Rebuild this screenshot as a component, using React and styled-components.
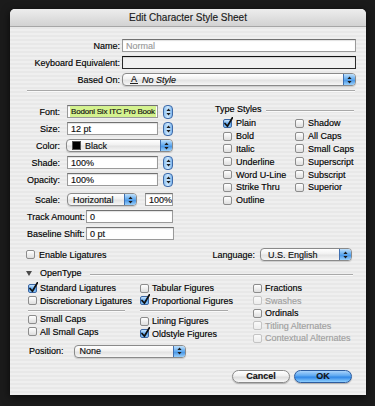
import React from 'react';
import styled, { createGlobalStyle } from 'styled-components';

const GlobalStyle = createGlobalStyle`
  html, body {
    margin: 0;
    padding: 0;
    background: #1b1b1b;
  }
  body {
    font-family: "Liberation Sans", Arial, sans-serif;
    font-size: 9px;
    color: #000;
    -webkit-text-stroke: 0.15px currentColor;
  }
`;

const Screen = styled.div`
  width: 375px;
  height: 406px;
  padding: 9px 9px 0 10px;
  box-sizing: border-box;
`;

const Dialog = styled.div`
  width: 356px;
  height: 386px;
  border-radius: 5px 5px 0 0;
  overflow: hidden;
  display: flex;
  flex-direction: column;
  background: repeating-linear-gradient(#efefef 0 2px, #e8e8e8 2px 4px);
  box-shadow: 0 2px 8px rgba(0, 0, 0, 0.7);
`;

const TitleBar = styled.div`
  height: 18px;
  flex: none;
  box-sizing: border-box;
  display: flex;
  align-items: center;
  justify-content: center;
  font-size: 10px;
  color: #1a1a1a;
  background: linear-gradient(#ededed, #d2d2d2);
  border-bottom: 1px solid #a6a6a6;
`;

const Body = styled.div`
  padding: 12px 10px 0 17px;
  display: flex;
  flex-direction: column;
`;

const TopGrid = styled.div`
  display: grid;
  grid-template-columns: 93px 1fr;
  grid-auto-rows: 13px;
  column-gap: 2px;
  row-gap: 4px;
  align-items: center;
`;

const Label = styled.span`
  text-align: right;
  white-space: nowrap;
  width: ${p => (p.$w ? `${p.$w}px` : 'auto')};
  flex: none;
  margin-right: ${p => p.$gap || 0}px;
`;

const TextInput = styled.div`
  height: 13px;
  box-sizing: border-box;
  width: ${p => (p.$w ? `${p.$w}px` : 'auto')};
  flex: none;
  display: flex;
  align-items: center;
  padding-left: 3px;
  border: 1px solid ${p => (p.$focus ? '#2a2a2a' : '#9a9a9a')};
  border-top-color: ${p => (p.$focus ? '#111' : '#717171')};
  background: ${p => (p.$focus ? '#f1f1f1' : '#fff')};
  box-shadow: inset 0 1px 1px rgba(0, 0, 0, 0.12);
  color: ${p => (p.$muted ? '#9a9a9a' : '#111')};
  white-space: nowrap;
  overflow: hidden;
  margin-right: ${p => p.$mr || 0}px;
`;

const Selection = styled.span`
  background: #d4f28f;
  margin-left: -1px;
  padding: 1px 1px;
  font-size: 8px;
  letter-spacing: -0.2px;
`;

const PopupBox = styled.div`
  height: 13px;
  box-sizing: border-box;
  width: ${p => (p.$w ? `${p.$w}px` : 'auto')};
  flex: none;
  display: flex;
  align-items: center;
  border: 1px solid #8a8a8a;
  border-radius: 4px;
  overflow: hidden;
  background: linear-gradient(#ffffff, #f1f1f1 45%, #e2e2e2 55%, #f6f6f6);
  box-shadow: 0 1px 1px rgba(0, 0, 0, 0.15);
  margin-right: ${p => p.$mr || 0}px;
`;

const PopupText = styled.span`
  flex: 1;
  display: flex;
  align-items: center;
  gap: 4px;
  padding-left: ${p => p.$pl || 7}px;
  white-space: nowrap;
  color: #111;
`;

const PopupCap = styled.span`
  width: 11px;
  align-self: stretch;
  display: flex;
  align-items: center;
  justify-content: center;
  border-left: 1px solid #3f6fb0;
  background: linear-gradient(#bfe0fb, #5ea8ee 50%, #3f8fe3 51%, #9ad0fb);
`;

const StepperBox = styled.span`
  width: 10px;
  height: 14px;
  box-sizing: border-box;
  flex: none;
  display: flex;
  align-items: center;
  justify-content: center;
  border: 1px solid #3f6aa8;
  border-radius: 4px;
  background: linear-gradient(90deg, #8fc3f2, #cfe8fd 50%, #7db6ee);
`;

const Swatch = styled.span`
  width: 7px;
  height: 7px;
  background: #000;
  border: 1px solid #555;
`;

const StyleIcon = styled.span`
  font-size: 9px;
  line-height: 8px;
  border-bottom: 1px solid #222;
  padding: 0 1px;
`;

const Italic = styled.span`
  font-style: italic;
`;

const Arrows = () => (
  <svg width="5" height="8" viewBox="0 0 5 8">
    <path d="M2.5 0.5 L4.6 3 L0.4 3 Z M2.5 7.5 L4.6 5 L0.4 5 Z" fill="#1d1d1d" />
  </svg>
);

const Stepper = () => (
  <StepperBox>
    <Arrows />
  </StepperBox>
);

const Popup = ({ w, mr, pl, children }) => (
  <PopupBox $w={w} $mr={mr}>
    <PopupText $pl={pl}>{children}</PopupText>
    <PopupCap>
      <Arrows />
    </PopupCap>
  </PopupBox>
);

const Separator = styled.div`
  height: 1px;
  background: #a9a9a9;
  border-bottom: 1px solid #fafafa;
  width: ${p => (p.$w ? `${p.$w}px` : 'auto')};
  margin: ${p => p.$m || '0'};
`;

const Middle = styled.div`
  display: flex;
  margin-top: 13px;
`;

const FieldColumn = styled.div`
  width: 188px;
  flex: none;
  display: flex;
  flex-direction: column;
  gap: 4px;
`;

const FieldRow = styled.div`
  display: flex;
  align-items: center;
  height: 13px;
  margin-top: ${p => p.$mt || 0}px;
`;

const StylesColumn = styled.div`
  flex: 1;
  display: flex;
  flex-direction: column;
  padding-right: 4px;
  margin-top: -1px;
`;

const GroupHeader = styled.div`
  display: flex;
  align-items: center;
  height: 10px;
  gap: ${p => p.$gap ?? 4}px;
`;

const HeaderLine = styled.span`
  flex: 1;
  height: 1px;
  background: #a9a9a9;
  border-bottom: 1px solid #fafafa;
  margin-top: 3px;
  margin-left: ${p => p.$ml || 0}px;
`;

const StylesGrid = styled.div`
  display: grid;
  grid-template-columns: 72px 1fr;
  grid-template-rows: repeat(7, 12.8px);
  grid-auto-flow: column;
  padding-left: 8px;
  margin-top: 3px;
`;

const CheckRow = styled.label`
  display: flex;
  align-items: center;
  gap: ${p => p.$gap || 3}px;
  height: ${p => p.$h || 12.5}px;
  white-space: nowrap;
  color: ${p => (p.$disabled ? '#a0a0a0' : '#000')};
`;

const Box = styled.span`
  position: relative;
  width: 9px;
  height: 9px;
  box-sizing: border-box;
  flex: none;
  border: 1px solid ${p => (p.$checked ? '#3b66a3' : p.$disabled ? '#c4c4c4' : '#8c8c8c')};
  border-radius: 2px;
  background: ${p =>
    p.$checked
      ? 'linear-gradient(#c8e4fd, #5da6ee 55%, #8cc6f7)'
      : p.$disabled
      ? 'linear-gradient(#fafafa, #ececec)'
      : 'linear-gradient(#ffffff, #dedede)'};
`;

const Tick = styled.svg`
  position: absolute;
  left: 0px;
  top: -3px;
`;

const Check = ({ label, checked, disabled, gap, h }) => (
  <CheckRow $disabled={disabled} $gap={gap} $h={h}>
    <Box $checked={checked} $disabled={disabled}>
      {checked && (
        <Tick width="9" height="11" viewBox="0 0 9 11">
          <path d="M1 6.5 L3.4 9.3 L8.4 0.8" stroke="#111" strokeWidth="1.7" fill="none" strokeLinecap="round" strokeLinejoin="round" />
        </Tick>
      )}
    </Box>
    {label}
  </CheckRow>
);

const LigRow = styled.div`
  display: flex;
  align-items: center;
  justify-content: space-between;
  height: 13px;
  margin-top: 8px;
  margin-left: -1px;
  padding-right: 4px;
`;

const LangGroup = styled.div`
  display: flex;
  align-items: center;
`;

const OpenTypeHeader = styled(GroupHeader)`
  margin-top: 7px;
  padding-right: 3px;
`;

const Disclosure = styled.span`
  width: 0;
  height: 0;
  border-left: 3px solid transparent;
  border-right: 3px solid transparent;
  border-top: 5px solid #4a4a4a;
  margin-left: -1px;
  margin-right: 8px;
`;

const OpenTypeGrid = styled.div`
  display: grid;
  grid-template-columns: 112px 113px 1fr;
  padding-left: 1px;
  margin-top: 4px;
`;

const OTColumn = styled.div`
  display: flex;
  flex-direction: column;
`;

const PositionRow = styled.div`
  display: flex;
  align-items: center;
  height: 13px;
  margin-left: 2px;
`;

const ButtonRow = styled.div`
  display: flex;
  justify-content: flex-end;
  gap: 4px;
  padding-right: 4px;
  margin-top: 12px;
`;

const Button = styled.button`
  width: 58px;
  height: 13px;
  box-sizing: border-box;
  padding: 0;
  border-radius: 7px;
  font-family: "Liberation Sans", Arial, sans-serif;
  font-size: 9px;
  font-weight: bold;
  color: #111;
  border: 1px solid ${p => (p.$primary ? '#2d5c9e' : '#8a8a8a')};
  background: ${p =>
    p.$primary
      ? 'linear-gradient(#a9d3fb, #5aa6f0 45%, #2f86e6 55%, #8fd0ff)'
      : 'linear-gradient(#ffffff, #f0f0f0 45%, #dcdcdc 55%, #f8f8f8)'};
  box-shadow: 0 1px 1px rgba(0, 0, 0, 0.25);
`;

export default function App() {
  return (
    <>
      <GlobalStyle />
      <Screen>
        <Dialog>
          <TitleBar>Edit Character Style Sheet</TitleBar>
          <Body>
            <TopGrid>
              <Label>Name:</Label>
              <TextInput $muted>Normal</TextInput>
              <Label>Keyboard Equivalent:</Label>
              <TextInput $focus />
              <Label>Based On:</Label>
              <Popup pl={7}>
                <StyleIcon>A</StyleIcon>
                <Italic>No Style</Italic>
              </Popup>
            </TopGrid>

            <Separator $m="4px 1px 0 0" />

            <Middle>
              <FieldColumn>
                <FieldRow>
                  <Label $w={33} $gap={7}>Font:</Label>
                  <TextInput $w={91} $mr={5}>
                    <Selection>Bodoni Six ITC Pro Book</Selection>
                  </TextInput>
                  <Stepper />
                </FieldRow>
                <FieldRow>
                  <Label $w={33} $gap={7}>Size:</Label>
                  <TextInput $w={91} $mr={5}>12 pt</TextInput>
                  <Stepper />
                </FieldRow>
                <FieldRow>
                  <Label $w={33} $gap={6}>Color:</Label>
                  <Popup w={107} pl={5}>
                    <Swatch />
                    <span>Black</span>
                  </Popup>
                </FieldRow>
                <FieldRow>
                  <Label $w={33} $gap={7}>Shade:</Label>
                  <TextInput $w={91} $mr={5}>100%</TextInput>
                  <Stepper />
                </FieldRow>
                <FieldRow>
                  <Label $w={33} $gap={7}>Opacity:</Label>
                  <TextInput $w={91} $mr={5}>100%</TextInput>
                  <Stepper />
                </FieldRow>
                <FieldRow $mt={3}>
                  <Label $w={33} $gap={7}>Scale:</Label>
                  <Popup w={70} mr={8} pl={5}>Horizontal</Popup>
                  <TextInput $w={28}>100%</TextInput>
                </FieldRow>
                <FieldRow>
                  <Label $w={56} $gap={3}>Track Amount:</Label>
                  <TextInput $w={87}>0</TextInput>
                </FieldRow>
                <FieldRow>
                  <Label $w={56} $gap={3}>Baseline Shift:</Label>
                  <TextInput $w={88}>0 pt</TextInput>
                </FieldRow>
              </FieldColumn>

              <StylesColumn>
                <GroupHeader>
                  <span>Type Styles</span>
                  <HeaderLine />
                </GroupHeader>
                <StylesGrid>
                  <Check label="Plain" checked gap={4} h={12.8} />
                  <Check label="Bold" gap={4} h={12.8} />
                  <Check label="Italic" gap={4} h={12.8} />
                  <Check label="Underline" gap={4} h={12.8} />
                  <Check label="Word U-Line" gap={4} h={12.8} />
                  <Check label="Strike Thru" gap={4} h={12.8} />
                  <Check label="Outline" gap={4} h={12.8} />
                  <Check label="Shadow" gap={4} h={12.8} />
                  <Check label="All Caps" gap={4} h={12.8} />
                  <Check label="Small Caps" gap={4} h={12.8} />
                  <Check label="Superscript" gap={4} h={12.8} />
                  <Check label="Subscript" gap={4} h={12.8} />
                  <Check label="Superior" gap={4} h={12.8} />
                </StylesGrid>
              </StylesColumn>
            </Middle>

            <LigRow>
              <Check label="Enable Ligatures" gap={4} h={13} />
              <LangGroup>
                <Label $gap={5}>Language:</Label>
                <Popup w={92} pl={7}>U.S. English</Popup>
              </LangGroup>
            </LigRow>

            <OpenTypeHeader $gap={0}>
              <Disclosure />
              <span>OpenType</span>
              <HeaderLine $ml={8} />
            </OpenTypeHeader>

            <OpenTypeGrid>
              <OTColumn>
                <Check label="Standard Ligatures" checked />
                <Check label="Discretionary Ligatures" />
                <Separator $w={97} $m="3px 0 1px 0" />
                <Check label="Small Caps" />
                <Check label="All Small Caps" />
              </OTColumn>
              <OTColumn>
                <Check label="Tabular Figures" />
                <Check label="Proportional Figures" checked />
                <Separator $w={88} $m="3px 0 3px 0" />
                <Check label="Lining Figures" />
                <Check label="Oldstyle Figures" checked />
              </OTColumn>
              <OTColumn>
                <Check label="Fractions" />
                <Check label="Swashes" disabled />
                <Check label="Ordinals" />
                <Check label="Titling Alternates" disabled />
                <Check label="Contextual Alternates" disabled />
              </OTColumn>
            </OpenTypeGrid>

            <PositionRow>
              <Label $gap={10}>Position:</Label>
              <Popup w={112} pl={5}>None</Popup>
            </PositionRow>

            <ButtonRow>
              <Button>Cancel</Button>
              <Button $primary>OK</Button>
            </ButtonRow>
          </Body>
        </Dialog>
      </Screen>
    </>
  );
}
